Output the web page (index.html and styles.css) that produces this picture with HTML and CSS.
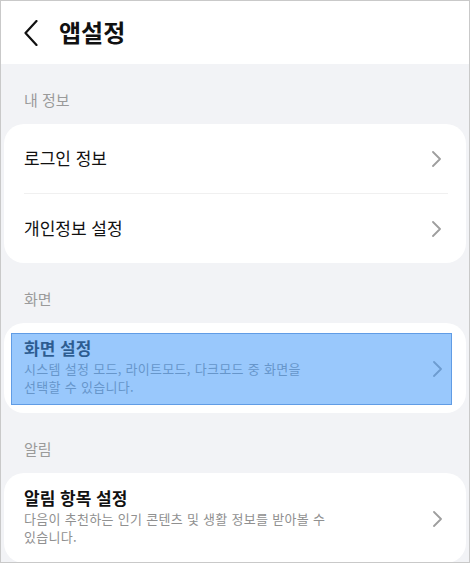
FILE: index.html
```html
<!DOCTYPE html>
<html lang="ko">
<head>
    <meta charset="UTF-8">
    <meta name="viewport" content="width=device-width, initial-scale=1.0">
    <title>앱설정</title>
    <link rel="stylesheet" href="styles.css">
</head>
<body>
    <div class="screen">
        <header class="topbar">
            <svg class="back" width="14" height="26" viewBox="0 0 14 26">
                <polyline points="12.5,1 1.5,13 12.5,25" fill="none" stroke="#111" stroke-width="2.2" stroke-linecap="round" stroke-linejoin="round"/>
            </svg>
            <h1>앱설정</h1>
        </header>

        <div class="section-label">내 정보</div>
        <div class="card">
            <div class="row">
                <span class="row-title">로그인 정보</span>
                <svg class="chev" width="12" height="16" viewBox="0 0 12 16"><polyline points="2,1 9,8 2,15" fill="none" stroke="#9e9e9e" stroke-width="1.8" stroke-linecap="round" stroke-linejoin="round"/></svg>
            </div>
            <div class="divider"></div>
            <div class="row">
                <span class="row-title">개인정보 설정</span>
                <svg class="chev" width="12" height="16" viewBox="0 0 12 16"><polyline points="2,1 9,8 2,15" fill="none" stroke="#9e9e9e" stroke-width="1.8" stroke-linecap="round" stroke-linejoin="round"/></svg>
            </div>
        </div>

        <div class="section-label">화면</div>
        <div class="card card-padded">
            <div class="item selected">
                <div class="item-text">
                    <div class="item-title">화면 설정</div>
                    <div class="item-desc">시스템 설정 모드, 라이트모드, 다크모드 중 화면을<br>선택할 수 있습니다.</div>
                </div>
                <svg class="chev" width="12" height="16" viewBox="0 0 12 16"><polyline points="2,1 9,8 2,15" fill="none" stroke="#9e9e9e" stroke-width="1.8" stroke-linecap="round" stroke-linejoin="round"/></svg>
            </div>
        </div>

        <div class="section-label">알림</div>
        <div class="card card-padded">
            <div class="item">
                <div class="item-text">
                    <div class="item-title">알림 항목 설정</div>
                    <div class="item-desc">다음이 추천하는 인기 콘텐츠 및 생활 정보를 받아볼 수<br>있습니다.</div>
                </div>
                <svg class="chev" width="12" height="16" viewBox="0 0 12 16"><polyline points="2,1 9,8 2,15" fill="none" stroke="#9e9e9e" stroke-width="1.8" stroke-linecap="round" stroke-linejoin="round"/></svg>
            </div>
        </div>
    </div>
</body>
</html>
```

FILE: styles.css
```css
body {
    margin: 0;
    font-family: "Noto Sans CJK KR", "Noto Sans", sans-serif;
    color: #111;
}
.screen {
    height: 563px;
    box-sizing: border-box;
    border: 1px solid #c9c9c9;
    background-color: #f2f3f6;
    overflow: hidden;
}
.topbar {
    height: 63px;
    background-color: #fff;
    display: flex;
    align-items: center;
    padding-left: 23px;
}
.topbar h1 {
    margin: -2px 0 0 21px;
    font-size: 24px;
    font-weight: 700;
    line-height: 30px;
}
.back {
    display: block;
}
.section-label {
    padding: 27px 23px 15px;
    font-size: 15px;
    line-height: 18px;
    color: #9a9a9a;
}
.card {
    margin: 0 3px;
    background-color: #fff;
    border-radius: 20px;
}
.card-padded {
    padding: 10px 14px 8px 7px;
}
.row {
    height: 69px;
    display: flex;
    align-items: center;
    justify-content: space-between;
    padding: 0 23px 0 20px;
}
.row-title {
    font-size: 17px;
    margin-top: -3px;
}
.divider {
    height: 1px;
    margin: 0 18px 0 20px;
    background-color: #f0f0f0;
}
.item {
    position: relative;
    height: 72px;
    box-sizing: border-box;
    display: flex;
    align-items: center;
    justify-content: space-between;
    padding: 0 8px 0 13px;
}
.item-text {
    align-self: flex-start;
    padding-top: 4px;
}
.item-title {
    font-size: 17px;
    font-weight: 700;
    line-height: 22px;
}
.item-desc {
    margin-top: 1px;
    font-size: 13px;
    line-height: 18px;
    letter-spacing: 0.3px;
    color: #909090;
    word-break: keep-all;
}
.chev {
    display: block;
    flex-shrink: 0;
}
.selected::after {
    content: "";
    position: absolute;
    inset: 0;
    background-color: rgba(70, 155, 250, 0.55);
    border: 1px solid rgba(50, 120, 210, 0.55);
}
```
